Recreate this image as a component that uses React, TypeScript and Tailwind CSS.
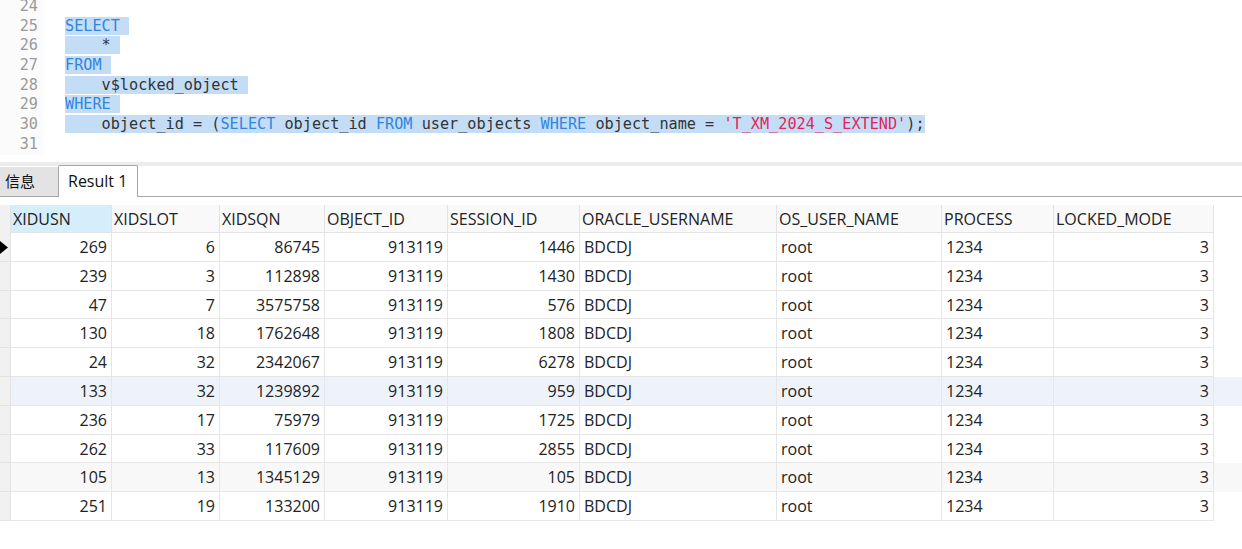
import React from "react";

const KW = "text-[#2f86df]";
const STR = "text-[#e2245a]";

type Seg = { t: string; c?: string };

const codeLines: { n: number; segs: Seg[]; sel: boolean }[] = [
  { n: 24, segs: [], sel: false },
  { n: 25, segs: [{ t: "SELECT", c: KW }, { t: " " }], sel: true },
  { n: 26, segs: [{ t: "    * " }], sel: true },
  { n: 27, segs: [{ t: "FROM", c: KW }, { t: " " }], sel: true },
  { n: 28, segs: [{ t: "    v$locked_object " }], sel: true },
  { n: 29, segs: [{ t: "WHERE", c: KW }, { t: " " }], sel: true },
  {
    n: 30,
    segs: [
      { t: "    object_id = (" },
      { t: "SELECT", c: KW },
      { t: " object_id " },
      { t: "FROM", c: KW },
      { t: " user_objects " },
      { t: "WHERE", c: KW },
      { t: " object_name = " },
      { t: "'T_XM_2024_S_EXTEND'", c: STR },
      { t: ");" },
    ],
    sel: true,
  },
  { n: 31, segs: [], sel: false },
];

const cols = [
  { name: "XIDUSN", w: 101, right: true },
  { name: "XIDSLOT", w: 108, right: true },
  { name: "XIDSQN", w: 105, right: true },
  { name: "OBJECT_ID", w: 123, right: true },
  { name: "SESSION_ID", w: 132, right: true },
  { name: "ORACLE_USERNAME", w: 197, right: false },
  { name: "OS_USER_NAME", w: 165, right: false },
  { name: "PROCESS", w: 112, right: false },
  { name: "LOCKED_MODE", w: 160, right: true },
];

const rows: string[][] = [
  ["269", "6", "86745", "913119", "1446", "BDCDJ", "root", "1234", "3"],
  ["239", "3", "112898", "913119", "1430", "BDCDJ", "root", "1234", "3"],
  ["47", "7", "3575758", "913119", "576", "BDCDJ", "root", "1234", "3"],
  ["130", "18", "1762648", "913119", "1808", "BDCDJ", "root", "1234", "3"],
  ["24", "32", "2342067", "913119", "6278", "BDCDJ", "root", "1234", "3"],
  ["133", "32", "1239892", "913119", "959", "BDCDJ", "root", "1234", "3"],
  ["236", "17", "75979", "913119", "1725", "BDCDJ", "root", "1234", "3"],
  ["262", "33", "117609", "913119", "2855", "BDCDJ", "root", "1234", "3"],
  ["105", "13", "1345129", "913119", "105", "BDCDJ", "root", "1234", "3"],
  ["251", "19", "133200", "913119", "1910", "BDCDJ", "root", "1234", "3"],
];

const gridFont = { fontFamily: "'Open Sans', 'Noto Sans CJK SC', sans-serif" };

export default function App() {
  return (
    <div className="w-[1242px] h-[549px] overflow-hidden bg-white flex flex-col text-[#222]">
      {/* Editor */}
      <div
        className="-mt-[3px] h-[165px] flex flex-col bg-white"
        style={{ fontFamily: "'DejaVu Sans Mono', monospace" }}
      >
        {codeLines.map((l) => (
          <div key={l.n} className="flex h-[19.7px] leading-[19.7px] text-[15.2px]">
            <div className="w-[43px] shrink-0 text-right pr-[5px] text-[#9a9a9a] bg-[#fbfbfb]">{l.n}</div>
            <div className="pl-[22px] whitespace-pre text-[#333]">
              <span className={l.sel ? "bg-[#c4ddf6]" : ""}>
                {l.segs.map((s, i) => (
                  <span key={i} className={s.c}>
                    {s.t}
                  </span>
                ))}
              </span>
            </div>
          </div>
        ))}
      </div>

      {/* separator band */}
      <div className="h-[4px] bg-[#ececec]" />

      {/* Tab bar */}
      <div className="h-[31px] flex items-end border-b border-[#a6a6a6] bg-white" style={gridFont}>
        <div className="w-[58px] h-[29px] bg-[#e3e3e3] text-[15px] leading-[29px] pl-[5px] text-[#111]">信息</div>
        <div className="w-[80px] h-[32px] -mb-px bg-white border border-b-0 border-[#a6a6a6] rounded-t-[2px] text-[16px] leading-[30px] pl-[9px] text-[#111]">
          Result 1
        </div>
      </div>

      {/* Grid */}
      <div className="mt-[8px] flex flex-col text-[16px]" style={gridFont}>
        <div className="flex h-[28px]">
          <div className="w-[11px] bg-[#f1f1f1] border-r border-[#e3e3e3]" />
          {cols.map((c, i) => (
            <div
              key={c.name}
              className={
                "h-full leading-[28px] pl-[2px] border-r border-b border-[#e3e3e3] text-[#222] whitespace-nowrap " +
                (i === 0 ? "bg-[#d4eefb]" : "bg-[#f9f9f9]")
              }
              style={{ width: c.w }}
            >
              {c.name}
            </div>
          ))}
        </div>
        {rows.map((r, ri) => (
          <div
            key={ri}
            className={
              "flex h-[28.8px] " + (ri === 5 ? "bg-[#eef3fa]" : ri === 8 ? "bg-[#f8f8f8]" : "bg-white")
            }
          >
            <div className="w-[11px] bg-[#f1f1f1] border-r border-b border-[#e3e3e3] relative">
              {ri === 0 && (
                <svg className="absolute left-0 top-[8px]" width="9" height="13" viewBox="0 0 9 13">
                  <path d="M0 0 L8 6.5 L0 13 Z" fill="#000" />
                </svg>
              )}
            </div>
            {cols.map((c, ci) => (
              <div
                key={ci}
                className={
                  "leading-[28px] border-r border-b border-[#e6e6e6] whitespace-nowrap " +
                  (c.right ? "text-right pr-[4px]" : "pl-[4px]")
                }
                style={{ width: c.w }}
              >
                {r[ci]}
              </div>
            ))}
          </div>
        ))}
      </div>
    </div>
  );
}
